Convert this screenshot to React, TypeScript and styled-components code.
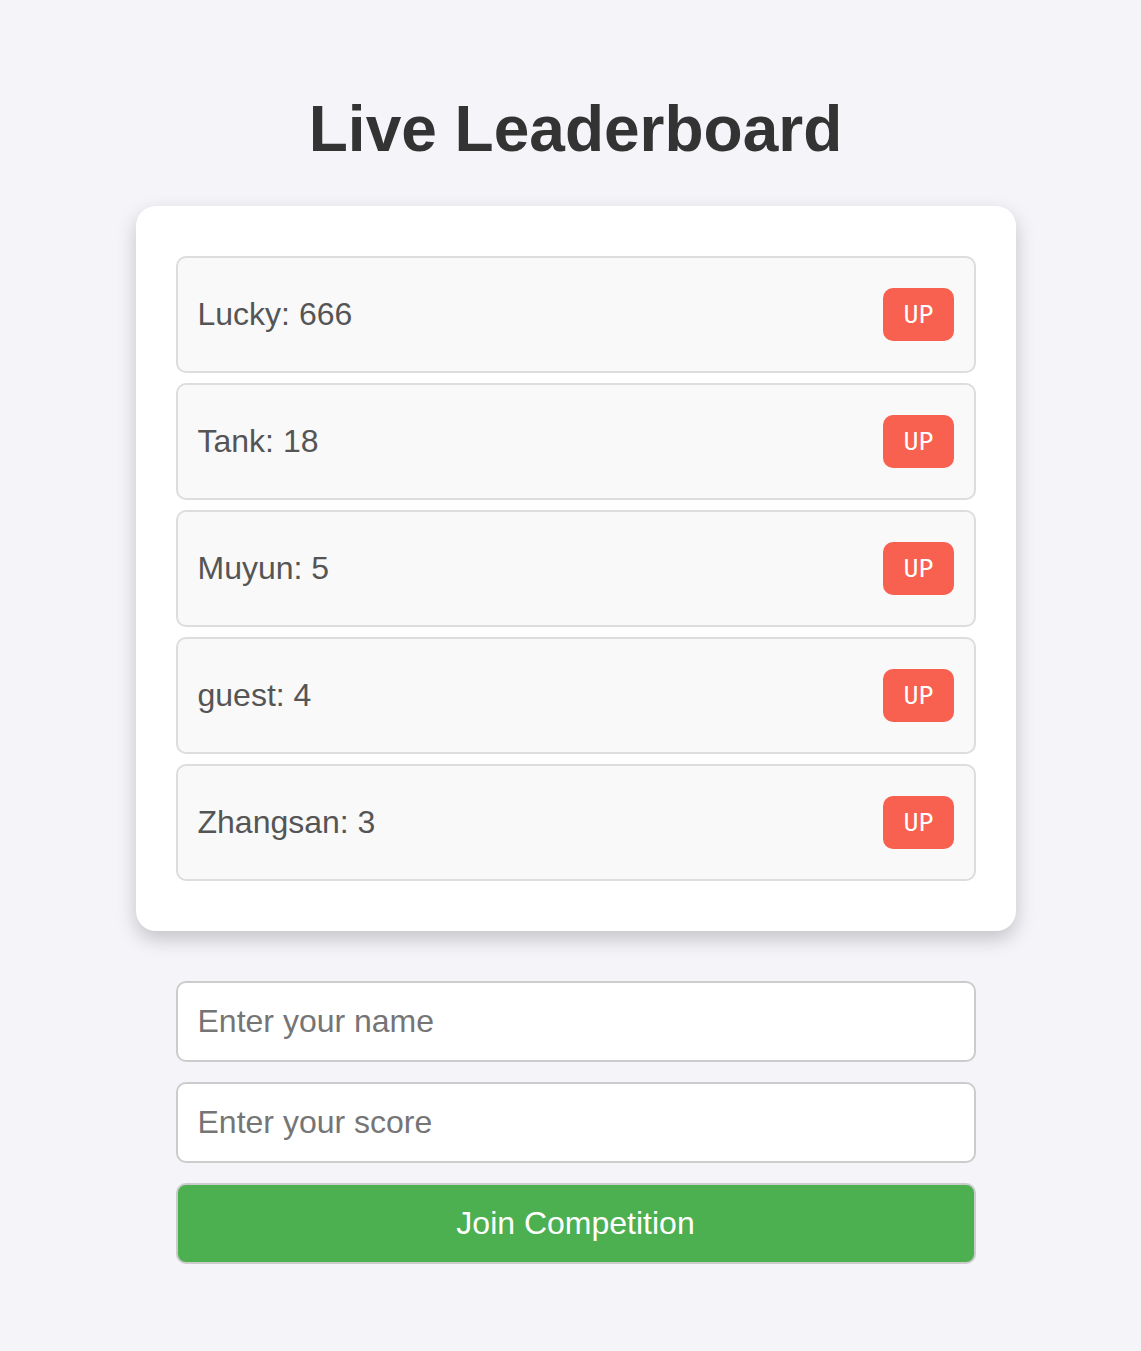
import React, { useState } from "react";
import styled, { createGlobalStyle } from "styled-components";

const GlobalStyle = createGlobalStyle`
  body {
    margin: 0;
    background: #f4f4f9;
    font-family: "Liberation Sans", Arial, sans-serif;
  }
  *, *::before, *::after { box-sizing: border-box; }
`;

const Page = styled.main`
  display: flex;
  flex-direction: column;
  align-items: center;
  padding: 92px 20px 86px 30px;
`;

const Title = styled.h1`
  margin: 0 0 40px;
  color: #333;
  font-size: 64px;
  line-height: 74px;
  text-align: center;
`;

const Board = styled.ul`
  display: flex;
  flex-direction: column;
  gap: 10px;
  width: 100%;
  max-width: 880px;
  margin: 0;
  padding: 50px 40px;
  list-style: none;
  background: #fff;
  border-radius: 20px;
  box-shadow: 0 8px 20px rgba(0, 0, 0, 0.2);
`;

const Entry = styled.li`
  display: flex;
  align-items: center;
  justify-content: space-between;
  padding: 30px 20px;
  color: #555;
  font-size: 32px;
  line-height: 37px;
  background: #f9f9f9;
  border: 2px solid #ddd;
  border-radius: 10px;
`;

const UpButton = styled.button`
  padding: 10px 20px;
  color: #fff;
  font-family: "DejaVu Sans Mono", monospace;
  font-size: 25px;
  line-height: 33px;
  background: #f8604f;
  border: none;
  border-radius: 10px;
  cursor: pointer;
`;

const Form = styled.form`
  display: flex;
  flex-direction: column;
  gap: 20px;
  width: 100%;
  max-width: 880px;
  margin-top: 50px;
  padding: 0 40px;
`;

const Field = styled.input`
  width: 100%;
  height: 81px;
  padding: 20px;
  font-family: inherit;
  font-size: 32px;
  line-height: 37px;
  background: #fff;
  border: 2px solid #ccc;
  border-radius: 10px;
  &::placeholder { color: #757575; }
`;

const JoinButton = styled.button`
  height: 81px;
  padding: 20px;
  color: #fff;
  font-family: inherit;
  font-size: 32px;
  line-height: 37px;
  background: #4caf50;
  border: 2px solid #ccc;
  border-radius: 10px;
  cursor: pointer;
`;

type Player = { name: string; score: number };

const initialPlayers: Player[] = [
  { name: "Lucky", score: 666 },
  { name: "Tank", score: 18 },
  { name: "Muyun", score: 5 },
  { name: "guest", score: 4 },
  { name: "Zhangsan", score: 3 },
];

const ranked = (list: Player[]) => [...list].sort((a, b) => b.score - a.score);

export default function App() {
  const [players, setPlayers] = useState(initialPlayers);
  const [name, setName] = useState("");
  const [score, setScore] = useState("");

  const raise = (target: string) =>
    setPlayers((list) =>
      ranked(list.map((p) => (p.name === target ? { ...p, score: p.score + 1 } : p)))
    );

  const join = (event: React.FormEvent) => {
    event.preventDefault();
    if (!name || !score) return;
    setPlayers((list) =>
      ranked([...list.filter((p) => p.name !== name), { name, score: Number(score) }])
    );
    setName("");
    setScore("");
  };

  return (
    <>
      <GlobalStyle />
      <Page>
        <Title>Live Leaderboard</Title>
        <Board>
          {players.map((p) => (
            <Entry key={p.name}>
              <span>{`${p.name}: ${p.score}`}</span>
              <UpButton type="button" onClick={() => raise(p.name)}>UP</UpButton>
            </Entry>
          ))}
        </Board>
        <Form onSubmit={join}>
          <Field
            type="text"
            aria-label="Name"
            placeholder="Enter your name"
            value={name}
            onChange={(e) => setName(e.target.value)}
          />
          <Field
            type="number"
            aria-label="Score"
            placeholder="Enter your score"
            value={score}
            onChange={(e) => setScore(e.target.value)}
          />
          <JoinButton type="submit">Join Competition</JoinButton>
        </Form>
      </Page>
    </>
  );
}
